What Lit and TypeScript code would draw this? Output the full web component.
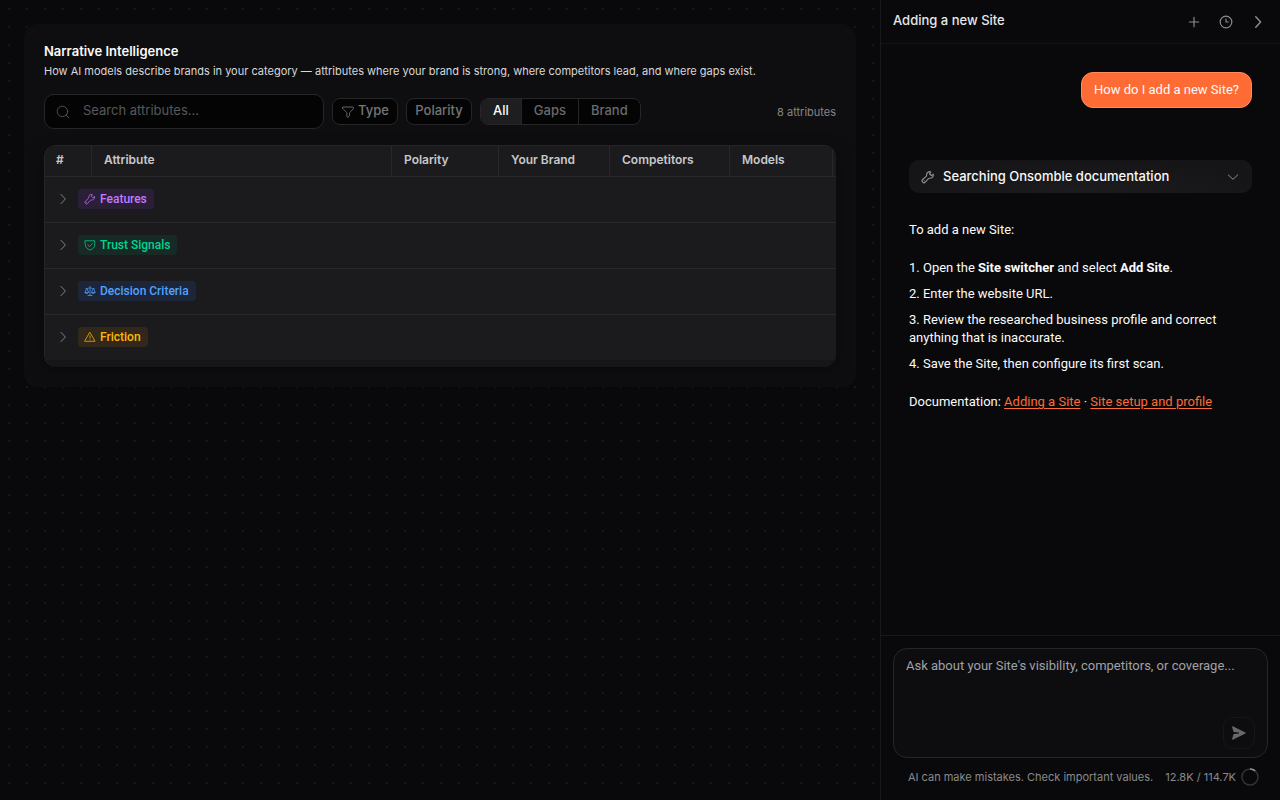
import { LitElement, html, css, svg } from "lit";
import { customElement, state } from "lit/decorators.js";

const icon = (size: number, body: unknown, width = 1.5) => html`<svg
  width=${size} height=${size} viewBox="0 0 24 24" fill="none" stroke="currentColor"
  stroke-width=${width} stroke-linecap="round" stroke-linejoin="round" aria-hidden="true"
>${body}</svg>`;

const paths = {
  search: svg`<circle cx="11" cy="11" r="9"/><path d="M17.500 17.500l4.500 4.500"/>`,
  funnel: svg`<path d="M2.500 4.500c0-.8.5-1 1.300-1h16.400c.8 0 1.300.2 1.300 1 0 1.500-1 2.700-2.500 4.200l-3 3c-1 1-1.300 1.600-1.300 2.600 0 2.400.3 4.300-.8 5.300-1 .9-2.200 1.400-3 1.400-.8-.3-.9-1.300-.9-2.300v-4.400c0-1-.3-1.600-1.300-2.600l-3-3C3.500 7.200 2.500 6 2.500 4.500z"/>`,
  right: svg`<path d="M9 5l6.500 7L9 19"/>`,
  down: svg`<path d="M5 9l7 6.500L19 9"/>`,
  plus: svg`<path d="M12 4v16M4 12h16"/>`,
  clock: svg`<circle cx="12" cy="12" r="10"/><path d="M12 7v5h4"/>`,
  wrench: svg`<path d="M20.400 7.600l-2.700 1.900-3.200-3.100 2-2.800c.3-.5 0-.9-.5-.9-3.700-.4-6.800 2.600-6.400 6.200.1.900 0 1.400-.7 2l-6 5.400a3.100 3.100 0 0 0 4.400 4.500l5.500-6c.6-.6 1.100-.8 2-.7 3.700.4 6.700-2.600 6.300-6.200 0-.5-.3-.6-.7-.3z"/><path d="M5.500 18.500h.01"/>`,
  shield: svg`<path d="M2.500 3.500h19V12c0 5-4.500 8.500-9.500 10-5-1.500-9.500-5-9.500-10z"/><path d="M7.500 12l3.500 3 5.500-5.500"/>`,
  scale: svg`<path d="M12 3v18M8 21h8M4 7h3c2 0 3-1.500 5-1.500S15 7 17 7h3M5.500 7L2 15c0 3 7 3 7 0zM18.500 7L15 15c0 3 7 3 7 0zM2 15h7M15 15h7"/>`,
  warning: svg`<path d="M12 3L22 20.500H2z"/><path d="M12 9.500v5M12 17.500h.01"/>`,
};

@customElement("app-root")
export class AppRoot extends LitElement {
  @state() private view = "All";

  private columns = ["#", "Attribute", "Polarity", "Your Brand", "Competitors", "Models", ""];

  private groups = [
    { name: "Features", tone: "purple", glyph: paths.wrench },
    { name: "Trust Signals", tone: "green", glyph: paths.shield },
    { name: "Decision Criteria", tone: "blue", glyph: paths.scale },
    { name: "Friction", tone: "amber", glyph: paths.warning },
  ];

  static styles = css`
    :host {
      display: grid;
      grid-template-columns: minmax(0, 1fr) 400px;
      min-height: 100vh;
      color: #fafafa;
      background: #09090b;
      font-family: Inter, "Liberation Sans", sans-serif;
      font-size: 12px;
      line-height: 18px;
    }
    * { box-sizing: border-box; }
    svg { display: block; flex: none; }
    h1, h2, p, ol { margin: 0; padding: 0; }
    button, input, textarea { font: inherit; color: inherit; margin: 0; }
    button { display: flex; align-items: center; justify-content: center; padding: 0; border: 0; background: none; cursor: pointer; }
    .tag, .thread, textarea { font-family: Roboto, Inter, sans-serif; }

    main {
      padding: 24px;
      background: radial-gradient(circle, #17171a 1px, transparent 1px) 0 0 / 18px 18px;
    }
    .card { padding: 20px; border-radius: 14px; background: #0e0e10; }
    .card h1 { font-size: 13px; line-height: 14px; font-weight: 600; }
    .lead { margin-top: 6px; font-size: 11px; line-height: 14px; color: #d8d8da; }
    .toolbar { display: flex; align-items: center; gap: 8px; margin-top: 16px; font-size: 13px; }
    .search { display: flex; align-items: center; gap: 13px; width: 280px; height: 35px; padding: 0 11px; border: 1px solid #262628; border-radius: 10px; background: #040404; color: #58585a; }
    .search input { flex: 1; min-width: 0; padding: 0 0 3px; border: 0; outline: 0; background: none; color: #fafafa; }
    .search input::placeholder { color: #58585a; opacity: 1; }
    .chip { min-width: 66px; height: 27px; gap: 3px; padding: 0 8px; border: 1px solid #262628; border-radius: 8px; background: #040404; color: #747476; font-weight: 500; }
    .chip span, .segments span { padding-bottom: 3px; }
    .segments { display: flex; border: 1px solid #262628; border-radius: 8px; background: #040404; overflow: hidden; }
    .segments button { height: 25px; padding: 0 12px; color: #6a6a6c; font-weight: 500; }
    .segments button + button { border-left: 1px solid #262628; }
    .segments .on { background: #1e1e20; color: #fafafa; }
    .count { margin-left: auto; font-size: 11px; color: #858587; }

    .frame { margin-top: 16px; padding-bottom: 7px; border: 1px solid #262628; border-width: 1px 0 0 1px; border-radius: 12px; background: #161618; overflow: hidden; box-shadow: 0 4px 16px rgb(0 0 0 / 35%); }
    table { width: 100%; table-layout: fixed; border-collapse: separate; border-spacing: 0; background: #1b1b1d; }
    th { height: 31px; padding: 0 12px 2px; border-right: 1px solid #28282a; border-bottom: 1px solid #28282a; color: #c8c8ca; font-size: 12px; font-weight: 600; text-align: left; }
    th:first-child { padding-left: 11px; }
    th:last-child { border-right: 0; padding: 0; }
    td { height: 46px; padding: 0 0 2px 10px; border-bottom: 1px solid #28282a; }
    tr:last-child td { height: 45px; border-bottom: 0; }
    .c0 { width: 47px; } .c2 { width: 107px; } .c3 { width: 111px; } .c4 { width: 120px; } .c5 { width: 103px; } .c6 { width: 3px; }
    .group { gap: 7px; color: #808082; }
    .tag { display: flex; align-items: center; gap: 4px; height: 20px; padding: 0 7px 0 6px; border-radius: 4px; font-weight: 500; }
    .purple { color: #c27aff; background: #2a1f37; }
    .green { color: #00d492; background: #182a26; }
    .blue { color: #51a2ff; background: #1d2538; }
    .amber { color: #ffb900; background: #32271b; }
    .tag svg { opacity: 0.75; }

    aside { display: flex; flex-direction: column; min-width: 0; border-left: 1px solid #18181a; background: #09090b; }
    .top { display: flex; align-items: center; gap: 8px; height: 44px; padding: 0 10px 0 12px; border-bottom: 1px solid #141416; }
    .top h2 { margin-right: auto; padding-bottom: 3px; font-size: 13px; font-weight: 500; color: #e6e6e8; }
    .top button { width: 24px; height: 24px; color: #8c8c90; }
    .thread { flex: 1; display: flex; flex-direction: column; padding: 28px; font-size: 13px; }
    .ask { align-self: flex-end; padding: 8px 12px; border: 1px solid #ff8a5c; border-radius: 12px; background: #ff6b35; }
    .step { justify-content: flex-start; gap: 8px; width: 100%; height: 33px; margin-top: 52px; padding: 0 11px 0 12px; border-radius: 10px; background: radial-gradient(ellipse at 50% 100%, #1c1c1e, #151517 80%); font-family: Inter, sans-serif; font-weight: 500; }
    .step svg { color: #8c8c90; }
    .step span { flex: 1; padding-bottom: 2px; text-align: left; }
    .answer { margin-top: 28px; }
    ol { margin: 20px 0; display: flex; flex-direction: column; gap: 8px; list-style: none; }
    strong { font-weight: 700; }
    a { color: #ff6b35; text-underline-offset: 2px; }
    .composer { padding: 12px 12px 14px; border-top: 1px solid #18181a; }
    .box { display: flex; flex-direction: column; height: 110px; padding: 8px 12px; border: 1px solid #262628; border-radius: 14px; background: #0d0d0f; }
    textarea { flex: 1; width: 100%; padding: 0; border: 0; outline: 0; resize: none; background: none; font-size: 13px; }
    textarea::placeholder { color: #a0a0a8; opacity: 1; }
    .send { align-self: flex-end; width: 32px; height: 32px; border: 1px solid #161618; border-radius: 10px; color: #68686a; }
    .foot { display: flex; align-items: center; justify-content: flex-end; gap: 5px; margin-top: 10px; padding-right: 9px; font-size: 11px; color: #89898b; }
    .foot p { margin-right: 7px; }
  `;

  render() {
    return html`
      <main>
        <section class="card">
          <h1>Narrative Intelligence</h1>
          <p class="lead">How AI models describe brands in your category — attributes where your brand is strong, where competitors lead, and where gaps exist.</p>
          <div class="toolbar">
            <label class="search">${icon(14, paths.search)}<input type="text" aria-label="Search attributes" placeholder="Search attributes..." /></label>
            <button class="chip">${icon(14, paths.funnel)}<span>Type</span></button>
            <button class="chip"><span>Polarity</span></button>
            <div class="segments" role="group" aria-label="View">
              ${["All", "Gaps", "Brand"].map((v) => html`<button class=${v === this.view ? "on" : ""} @click=${() => (this.view = v)}><span>${v}</span></button>`)}
            </div>
            <span class="count">8 attributes</span>
          </div>
          <div class="frame">
            <table>
              <colgroup>${this.columns.map((_, i) => html`<col class="c${i}" />`)}</colgroup>
              <thead><tr>${this.columns.map((c) => html`<th scope="col">${c}</th>`)}</tr></thead>
              <tbody>
                ${this.groups.map((g) => html`<tr><td colspan="7"><button class="group" aria-expanded="false">${icon(16, paths.right)}<span class="tag ${g.tone}">${icon(12, g.glyph, 2)}${g.name}</span></button></td></tr>`)}
              </tbody>
            </table>
          </div>
        </section>
      </main>
      <aside>
        <header class="top">
          <h2>Adding a new Site</h2>
          <button aria-label="New chat">${icon(14, paths.plus, 2)}</button>
          <button aria-label="History">${icon(14, paths.clock, 2)}</button>
          <button aria-label="Collapse panel">${icon(18, paths.right, 2)}</button>
        </header>
        <div class="thread">
          <p class="ask">How do I add a new Site?</p>
          <button class="step" aria-expanded="false">${icon(14, paths.wrench, 2)}<span>Searching Onsomble documentation</span>${icon(16, paths.down)}</button>
          <div class="answer">
            <p>To add a new Site:</p>
            <ol>
              <li>1. Open the <strong>Site switcher</strong> and select <strong>Add Site</strong>.</li>
              <li>2. Enter the website URL.</li>
              <li>3. Review the researched business profile and correct anything that is inaccurate.</li>
              <li>4. Save the Site, then configure its first scan.</li>
            </ol>
            <p>Documentation: <a href="#adding">Adding a Site</a> · <a href="#setup">Site setup and profile</a></p>
          </div>
        </div>
        <div class="composer">
          <div class="box">
            <textarea aria-label="Message" placeholder="Ask about your Site's visibility, competitors, or coverage..."></textarea>
            <button class="send" aria-label="Send"><svg width="16" height="16" viewBox="0 0 16 16" fill="currentColor"><path d="M1.800 1.300c-.4-.3-.8.100-.7.600L2.600 7l5.400.5v1L2.600 9l-1.500 5.100c-.1.500.3.900.7.600l12.600-6.200c.5-.3.5-.7 0-1z"/></svg></button>
          </div>
          <div class="foot">
            <p>AI can make mistakes. Check important values.</p>
            <span>12.8K / 114.7K</span>
            <svg width="18" height="18" viewBox="0 0 18 18" fill="none" stroke-width="1.500"><circle cx="9" cy="9" r="8" stroke="#343436"/><path d="M9 1a8 8 0 0 1 5.200 1.900" stroke="#929294"/></svg>
          </div>
        </div>
      </aside>
    `;
  }
}
